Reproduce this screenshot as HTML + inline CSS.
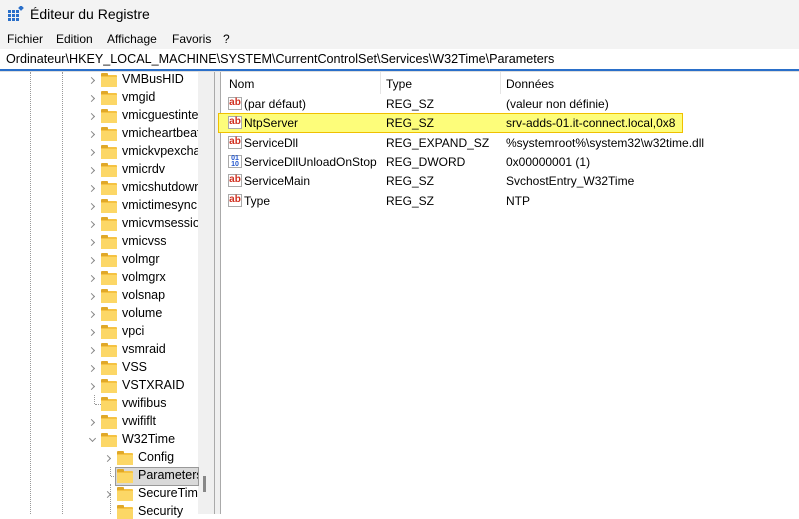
<!DOCTYPE html><html><head><style>
body{margin:0;width:799px;height:514px;overflow:hidden;background:#fff;font-family:"Liberation Sans",sans-serif;font-size:12px;color:#000;position:relative}
.a{position:absolute;white-space:nowrap}
.fold{position:absolute;width:16px;height:12px;background:#f5c242;border-radius:1px}
.fold:before{content:"";position:absolute;left:0;top:-2px;width:7px;height:3px;background:#e0a828;border-radius:1px 1px 0 0}
.fold:after{content:"";position:absolute;left:0;top:2px;width:16px;height:10px;background:#fcd766}
.chev{position:absolute;width:4px;height:4px;border-right:1px solid #888;border-bottom:1px solid #888;transform:rotate(-45deg)}
.ab{position:absolute;width:14px;height:13px;border:1px solid #aaa;background:#fff;font-size:10px;font-weight:bold;color:#d03020;line-height:10px;text-align:center;box-sizing:border-box}
.vd{position:absolute;border-left:1px dotted #999}
</style></head><body>
<div class="a" style="left:0;top:0;width:799px;height:30px;background:#f3f3f3"></div>
<svg class="a" style="left:8px;top:6px" width="16" height="16"><g fill="#2a6fc9"><rect x="0" y="4" width="3" height="3"/><rect x="4" y="4" width="3" height="3"/><rect x="0" y="8" width="3" height="3"/><rect x="4" y="8" width="3" height="3"/><rect x="8" y="8" width="3" height="3"/><rect x="0" y="12" width="3" height="3"/><rect x="4" y="12" width="3" height="3"/><rect x="8" y="12" width="3" height="3"/><rect x="8" y="4" width="3" height="3"/><rect x="11" y="0" width="4" height="4" transform="rotate(45 13 2)"/></g></svg>
<div class="a" style="left:30px;top:6px;font-size:14px">Éditeur du Registre</div>
<div class="a" style="left:0;top:30px;width:799px;height:19px;background:#f3f3f3"></div>
<div class="a" style="left:7px;top:32px">Fichier</div><div class="a" style="left:56px;top:32px">Edition</div><div class="a" style="left:107px;top:32px">Affichage</div><div class="a" style="left:172px;top:32px">Favoris</div><div class="a" style="left:223px;top:32px">?</div>
<div class="a" style="left:0;top:49px;width:799px;height:20px;background:#fff;border-bottom:2px solid #2a6fc9"></div>
<div class="a" style="left:6px;top:52px;font-size:12.6px">Ordinateur\HKEY_LOCAL_MACHINE\SYSTEM\CurrentControlSet\Services\W32Time\Parameters</div>
<div class="a" style="left:0;top:71px;width:799px;height:1px;background:#ddd"></div>
<div class="a" style="left:198px;top:72px;width:16px;height:442px;background:#f0f0f0"></div>
<div class="a" style="left:203px;top:476px;width:3px;height:16px;background:#888"></div>
<div class="a" style="left:214px;top:72px;width:1px;height:442px;background:#aaa"></div>
<div class="a" style="left:215px;top:72px;width:5px;height:442px;background:#f0f0f0"></div>
<div class="a" style="left:220px;top:72px;width:1px;height:442px;background:#aaa"></div>
<div class="vd" style="left:30px;top:72px;height:442px"></div>
<div class="vd" style="left:62px;top:72px;height:442px"></div>
<div class="vd" style="left:110px;top:484px;height:30px"></div>
<div class="a" style="left:115px;top:467px;width:84px;height:19px;background:#d9d9d9;border:1px solid #999;box-sizing:border-box"></div>
<div id="tree"></div>
<script>
var items=["VMBusHID","vmgid","vmicguestinte","vmicheartbeat","vmickvpexcha","vmicrdv","vmicshutdown","vmictimesync","vmicvmsessio","vmicvss","volmgr","volmgrx","volsnap","volume","vpci","vsmraid","VSS","VSTXRAID","vwifibus","vwififlt","W32Time"];
var h="";
items.forEach(function(t,i){var y=80+i*18;
 if(t=="vwifibus") h+='<div class="vd" style="left:94px;top:'+(y-9)+'px;height:9px"></div><div class="a" style="left:95px;top:'+(y)+'px;width:6px;border-top:1px dotted #999"></div>';
 else if(t=="W32Time") h+='<div class="chev" style="left:90px;top:'+(y-4)+'px;transform:rotate(45deg)"></div>';
 else h+='<div class="chev" style="left:89px;top:'+(y-2)+'px"></div>';
 h+='<div class="fold" style="left:101px;top:'+(y-5)+'px"></div><div class="a" style="left:122px;top:'+(y-8)+'px;font-size:12.5px;width:76px;overflow:hidden">'+t+'</div>';});
["Config","Parameters","SecureTime","Security"].forEach(function(t,i){var y=458+i*18;
 if(t=="Parameters") h+='<div class="vd" style="left:110px;top:'+(y-9)+'px;height:9px"></div><div class="a" style="left:111px;top:'+y+'px;width:5px;border-top:1px dotted #999"></div>';
 else if(t!="Security") h+='<div class="chev" style="left:105px;top:'+(y-2)+'px"></div>';
 h+='<div class="fold" style="left:117px;top:'+(y-5)+'px"></div><div class="a" style="left:138px;top:'+(y-8)+'px;font-size:12.5px;width:60px;overflow:hidden">'+t+'</div>';});
document.getElementById("tree").innerHTML=h;
</script>
<div class="a" style="left:380px;top:72px;width:1px;height:22px;background:#e5e5e5"></div>
<div class="a" style="left:500px;top:72px;width:1px;height:22px;background:#e5e5e5"></div>
<div class="a" style="left:229px;top:77px">Nom</div><div class="a" style="left:386px;top:77px">Type</div><div class="a" style="left:506px;top:77px">Données</div>
<div class="a" style="left:218px;top:113px;width:465px;height:20px;background:#fdfd7a;border:1px solid #f0c000;box-sizing:border-box"></div>
<div id="list"></div>
<script>
var r=[["(par défaut)","REG_SZ","(valeur non définie)"],["NtpServer","REG_SZ","srv-adds-01.it-connect.local,0x8"],["ServiceDll","REG_EXPAND_SZ","%systemroot%\\system32\\w32time.dll"],["ServiceDllUnloadOnStop","REG_DWORD","0x00000001 (1)"],["ServiceMain","REG_SZ","SvchostEntry_W32Time"],["Type","REG_SZ","NTP"]];
var h="";r.forEach(function(x,i){var y=97+i*19.3;
 var ic=x[1]=="REG_DWORD"?'<div class="ab" style="left:228px;top:'+(y)+'px;color:#2255cc;font-size:7px;line-height:6px">01<br>10</div>':'<div class="ab" style="left:228px;top:'+y+'px">ab</div>';
 h+=ic+'<div class="a" style="left:244px;top:'+y+'px">'+x[0]+'</div><div class="a" style="left:386px;top:'+y+'px">'+x[1]+'</div><div class="a" style="left:506px;top:'+y+'px">'+x[2]+'</div>';});
document.getElementById("list").innerHTML=h;
</script>
</body></html>
